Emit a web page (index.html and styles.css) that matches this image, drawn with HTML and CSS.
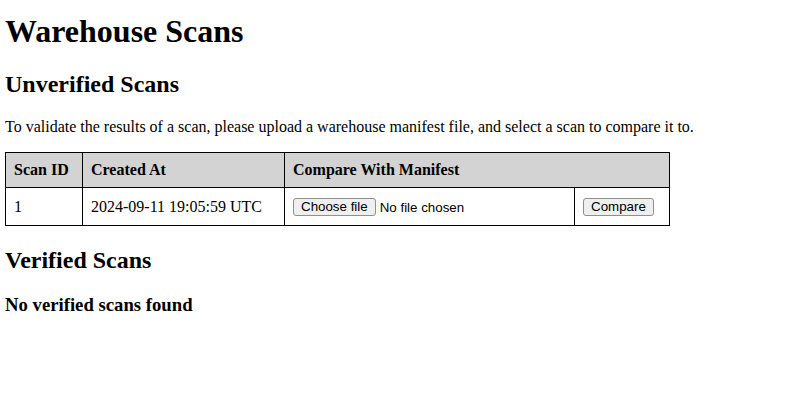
FILE: index.html
```html
<!DOCTYPE html>
<html>
<head>
<meta charset="utf-8">
<link rel="stylesheet" href="styles.css">
</head>
<body>
<h1 class="title">Warehouse Scans</h1>
<h2>Unverified Scans</h2>
<p>To validate the results of a scan, please upload a warehouse manifest file, and select a scan to compare it to.</p>
<table class="scans">
<colgroup>
<col class="c-id"><col class="c-date"><col class="c-file"><col class="c-btn">
</colgroup>
<thead>
<tr><th>Scan ID</th><th>Created At</th><th colspan="2">Compare With Manifest</th></tr>
</thead>
<tbody>
<tr>
<td>1</td>
<td>2024-09-11 19:05:59 UTC</td>
<td><label class="file"><input class="file-input" type="file"><span class="btn">Choose file</span><span class="file-name">No file chosen</span></label></td>
<td><button class="btn" type="button">Compare</button></td>
</tr>
</tbody>
</table>
<h2 class="verified">Verified Scans</h2>
<h3>No verified scans found</h3>
</body>
</html>
```
FILE: styles.css
```css
body {
  margin: 5px;
  font-family: "Liberation Serif", "Times New Roman", serif;
  color: #000;
  background: #fff;
}
.title {
  margin-top: 7.5px;
}
.scans {
  border-collapse: collapse;
  table-layout: fixed;
  width: 664px;
}
.c-id { width: 77px; }
.c-date { width: 202px; }
.c-file { width: 290px; }
.c-btn { width: 95px; }
.scans th, .scans td {
  border: 1px solid #000;
  padding: 8px;
  text-align: left;
}
.scans td {
  padding: 9px 8px 9px;
}
.scans th {
  background: #d3d3d3;
}
.verified {
  margin-top: 21px;
}
.file {
  display: inline-flex;
  align-items: center;
  gap: 4px;
  font-family: "Liberation Sans", Arial, sans-serif;
  font-size: 13.33px;
}
.file-input {
  display: none;
}
.btn {
  display: inline-block;
  font-family: "Liberation Sans", Arial, sans-serif;
  font-size: 13.33px;
  line-height: 14px;
  padding: 1px 7px;
  margin: 0;
  border: 1px solid #8f8f8f;
  border-radius: 3px;
  background: #efefef;
  color: #000;
  vertical-align: middle;
}
.file-name {
  color: #000;
}
```
